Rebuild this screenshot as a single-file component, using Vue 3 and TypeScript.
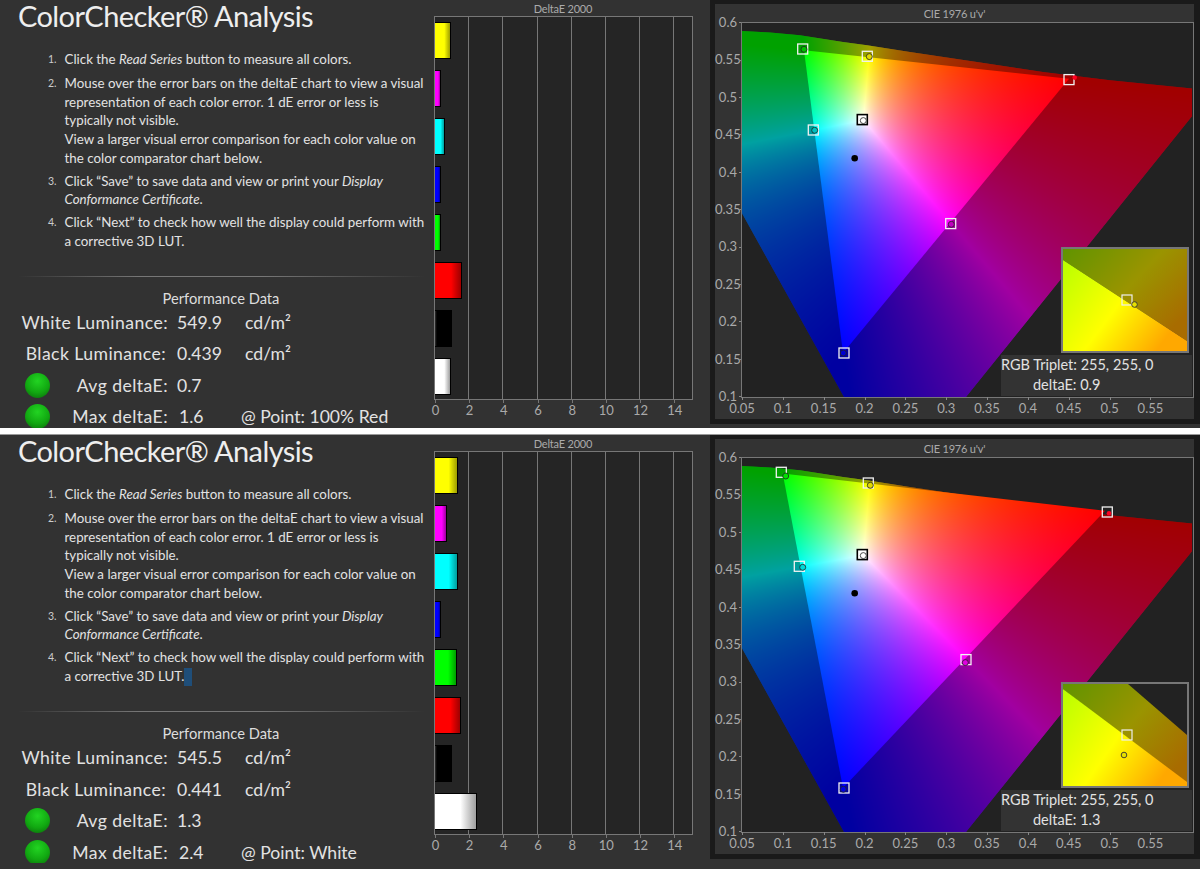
<template>
  <div class="page">
    <section v-for="(panel, i) in panels" :key="i" class="panel" :class="{ first: i === 0 }">
      <div class="info">
        <h1 class="title">ColorChecker® Analysis</h1>
        <ol class="steps">
          <li><span class="num">1.</span><p>Click the <em>Read Series</em> button to measure all colors.</p></li>
          <li>
            <span class="num">2.</span>
            <p>
              Mouse over the error bars on the deltaE chart to view a visual<br />
              representation of each color error. 1 dE error or less is<br />
              typically not visible.<br />
              View a larger visual error comparison for each color value on<br />
              the color comparator chart below.
            </p>
          </li>
          <li>
            <span class="num">3.</span>
            <p>Click “Save” to save data and view or print your <em>Display</em><br /><em>Conformance Certificate</em>.</p>
          </li>
          <li>
            <span class="num">4.</span>
            <p>
              Click “Next” to check how well the display could perform with<br />
              a corrective 3D LUT.<span v-if="panel.selected" class="selection"></span>
            </p>
          </li>
        </ol>
        <div class="rule"></div>
        <h2 class="perf-title">Performance Data</h2>
        <div class="perf">
          <div class="row">
            <span class="label">White Luminance:</span>
            <span class="value">{{ panel.white }}</span>
            <span class="unit">cd/m²</span>
          </div>
          <div class="row">
            <span class="label black">Black Luminance:</span>
            <span class="value">{{ panel.black }}</span>
            <span class="unit">cd/m²</span>
          </div>
          <div class="row">
            <span class="label"><i class="led"></i>Avg deltaE:</span>
            <span class="value">{{ panel.avg }}</span>
          </div>
          <div class="row">
            <span class="label"><i class="led"></i>Max deltaE:</span>
            <span class="value max">{{ panel.max }}</span>
            <span class="point">@ Point: {{ panel.point }}</span>
          </div>
        </div>
      </div>

      <div class="delta">
        <div class="chart-title">DeltaE 2000</div>
        <div class="bars">
          <div
            v-for="bar in panel.bars"
            :key="bar.color"
            class="bar"
            :style="{ width: bar.value * unitWidth + 'px', background: barFill(bar.color) }"
          ></div>
        </div>
        <div class="bar-ticks"></div>
        <div class="bar-labels">
          <span v-for="n in barScale" :key="n">{{ n }}</span>
        </div>
      </div>

      <div class="cie">
        <div class="cie-inner">
          <div class="chart-title cie-title">CIE 1976 u'v'</div>
          <div class="cie-body">
            <div class="y-axis">
              <span v-for="v in yScale" :key="v">{{ v }}</span>
            </div>
            <div class="plot">
              <canvas ref="canvases" :data-panel="i" width="451" height="374"></canvas>
              <svg class="markers" viewBox="742 22.7 451 374" width="451" height="374">
                <circle cx="854.7" cy="158" r="3.3" fill="#000" />
                <g v-for="m in panel.markers" :key="m.color">
                  <rect
                    :x="m.x - 5"
                    :y="m.y - 5"
                    width="10"
                    height="10"
                    :fill="m.color === '#ffffff' ? '#fff' : 'none'"
                    :stroke="m.color === '#ffffff' ? '#000' : '#f2f2f2'"
                    :stroke-width="m.color === '#ffffff' ? 1.6 : 1.3"
                  />
                  <circle :cx="m.cx" :cy="m.cy" :r="m.color === '#ff0020' ? 2.3 : 3" :fill="m.color" :stroke="m.color === '#ff0020' ? 'none' : '#222'" stroke-width="0.8" />
                </g>
              </svg>
              <div class="inset">
                <svg viewBox="0 0 124 102" width="124" height="102">
                  <defs>
                    <linearGradient :id="'hi' + i" x1="0" y1="0" x2="1" y2="0.55">
                      <stop offset="0" stop-color="#b8ff00" />
                      <stop offset="0.55" stop-color="#ffff00" />
                      <stop offset="1" stop-color="#ffa800" />
                    </linearGradient>
                    <linearGradient :id="'lo' + i" x1="0" y1="0" x2="1" y2="0.7">
                      <stop offset="0" stop-color="#609400" />
                      <stop offset="0.55" stop-color="#9a9400" />
                      <stop offset="1" stop-color="#a86c00" />
                    </linearGradient>
                  </defs>
                  <rect width="124" height="102" fill="#222" />
                  <polygon :points="panel.insetBand" :fill="`url(#lo${i})`" />
                  <polygon :points="panel.insetGamut" :fill="`url(#hi${i})`" />
                  <rect x="59" y="46" width="10" height="10" fill="none" stroke="#eee" stroke-width="1.2" />
                  <circle :cx="panel.insetDot[0]" :cy="panel.insetDot[1]" r="2.8" fill="#e6e000" stroke="#333" stroke-width="0.9" />
                </svg>
              </div>
              <div class="readout">
                <div>RGB Triplet: 255, 255, 0</div>
                <div class="readout-delta">deltaE: {{ panel.readout }}</div>
              </div>
            </div>
          </div>
          <div class="x-axis">
            <span v-for="u in xScale" :key="u">{{ u }}</span>
          </div>
        </div>
      </div>
    </section>
  </div>
</template>

<script setup lang="ts">
import { onMounted, ref } from 'vue'

type Pt = [number, number]

interface Marker {
  color: string
  x: number
  y: number
  cx: number
  cy: number
}

interface Bar {
  color: string
  value: number
}

interface Panel {
  selected: boolean
  white: string
  black: string
  avg: string
  max: string
  point: string
  readout: string
  gamut: { r: Pt; g: Pt; b: Pt }
  bars: Bar[]
  markers: Marker[]
  insetBand: string
  insetGamut: string
  insetDot: Pt
}

const unitWidth = 17.1
const barScale = [0, 2, 4, 6, 8, 10, 12, 14]
const yScale = ['0.6', '0.55', '0.5', '0.45', '0.4', '0.35', '0.3', '0.25', '0.2', '0.15', '0.1']
const xScale = ['0.05', '0.1', '0.15', '0.2', '0.25', '0.3', '0.35', '0.4', '0.45', '0.5', '0.55']

const whitePoint: Pt = [863, 119.5]
const locus: Pt[] = [
  [742, 30.7], [770, 32.3], [800, 35], [843, 41.7], [867, 45], [910, 51.7], [977, 61.7],
  [1043, 71.7], [1110, 80], [1192, 88.3], [1192, 116], [966, 396.7], [844, 396.7], [742, 213],
]

const barColors = ['#ffff00', '#ff00ff', '#00ffff', '#0000ff', '#00ff00', '#ff0000', '#000000', '#ffffff']
const makeBars = (values: number[]): Bar[] => values.map((value, i) => ({ color: barColors[i], value }))

const panels: Panel[] = [
  {
    selected: false,
    white: '549.9',
    black: '0.439',
    avg: '0.7',
    max: '1.6',
    point: '100% Red',
    readout: '0.9',
    gamut: { r: [1069, 78.5], g: [804, 50], b: [843, 352.7] },
    bars: makeBars([0.9, 0.3, 0.55, 0.35, 0.3, 1.55, 1.0, 0.93]),
    markers: [
      { color: '#00c000', x: 802.7, y: 48.7, cx: 804, cy: 49 },
      { color: '#e0d800', x: 867.3, y: 56, cx: 869.3, cy: 56.3 },
      { color: '#ff0020', x: 1069, y: 79.3, cx: 1074.7, cy: 77.3 },
      { color: '#ffffff', x: 862.3, y: 119.3, cx: 863.3, cy: 120.3 },
      { color: '#00c0c0', x: 813.3, y: 129.7, cx: 814.7, cy: 130 },
      { color: '#c000c0', x: 950.7, y: 223.3, cx: 951.3, cy: 224 },
      { color: '#0000d0', x: 844, y: 352.7, cx: 843.3, cy: 352.7 },
    ],
    insetBand: '0,0 124,0 124,92 0,11',
    insetGamut: '0,11 124,92 124,102 0,102',
    insetDot: [71.5, 55.5],
  },
  {
    selected: true,
    white: '545.5',
    black: '0.441',
    avg: '1.3',
    max: '2.4',
    point: 'White',
    readout: '1.3',
    gamut: { r: [1105, 75.5], g: [782.7, 38.3], b: [843, 352.7] },
    bars: makeBars([1.35, 0.65, 1.33, 0.35, 1.27, 1.5, 1.0, 2.44]),
    markers: [
      { color: '#00e000', x: 781.3, y: 37, cx: 785.7, cy: 40.7 },
      { color: '#e0d800', x: 868.3, y: 47.7, cx: 870.3, cy: 50 },
      { color: '#ff0020', x: 1107.3, y: 76.7, cx: 1109, cy: 78 },
      { color: '#ffffff', x: 862.3, y: 119.3, cx: 863.3, cy: 120.3 },
      { color: '#00d8d8', x: 799.3, y: 131, cx: 802.7, cy: 132 },
      { color: '#e000e0', x: 966, y: 224.3, cx: 965.3, cy: 227.3 },
      { color: '#0000e0', x: 844, y: 352.7, cx: 843.3, cy: 354 },
    ],
    insetBand: '0,0 65,0 124,51 124,102 0,5',
    insetGamut: '0,5 124,98 124,102 0,102',
    insetDot: [61, 71],
  },
]

const barFill = (color: string): string =>
  color === '#000000'
    ? 'linear-gradient(90deg, #333 0, #000 12%, #000 100%)'
    : `linear-gradient(90deg, ${color} 0, ${color} 62%, color-mix(in srgb, ${color} 62%, #000) 100%)`

const canvases = ref<HTMLCanvasElement[]>([])

const tracePath = (ctx: CanvasRenderingContext2D, pts: Pt[], ox: number, oy: number) => {
  ctx.beginPath()
  pts.forEach(([x, y], i) => (i ? ctx.lineTo(x - ox, y - oy) : ctx.moveTo(x - ox, y - oy)))
  ctx.closePath()
}

// real chromaticity rendering: white-balanced barycentric weights, clamped out of gamut
const drawGamut = (canvas: HTMLCanvasElement, panel: Panel) => {
  const ctx = canvas.getContext('2d')
  if (!ctx) return
  const { width, height } = canvas
  const ox = 742
  const oy = 22.7
  const { r, g, b } = panel.gamut
  const det = (g[1] - b[1]) * (r[0] - b[0]) + (b[0] - g[0]) * (r[1] - b[1])
  const weights = (x: number, y: number): [number, number, number] => {
    const a = ((g[1] - b[1]) * (x - b[0]) + (b[0] - g[0]) * (y - b[1])) / det
    const c = ((b[1] - r[1]) * (x - b[0]) + (r[0] - b[0]) * (y - b[1])) / det
    return [a, c, 1 - a - c]
  }
  const w = weights(whitePoint[0], whitePoint[1])

  const image = ctx.createImageData(width, height)
  for (let py = 0; py < height; py++) {
    for (let px = 0; px < width; px++) {
      const v = weights(px + ox, py + oy)
      const c = v.map((k, n) => Math.max(k / w[n], 0))
      const top = Math.max(c[0], c[1], c[2]) || 1
      const at = (py * width + px) * 4
      for (let n = 0; n < 3; n++) image.data[at + n] = 255 * Math.pow(c[n] / top, 0.95)
      image.data[at + 3] = 255
    }
  }
  const buffer = document.createElement('canvas')
  buffer.width = width
  buffer.height = height
  buffer.getContext('2d')?.putImageData(image, 0, 0)

  ctx.save()
  tracePath(ctx, locus, ox, oy)
  ctx.clip()
  ctx.drawImage(buffer, 0, 0)
  ctx.fillStyle = 'rgba(0, 0, 0, 0.37)'
  ctx.fillRect(0, 0, width, height)
  ctx.restore()

  ctx.save()
  tracePath(ctx, [r, g, b], ox, oy)
  ctx.clip()
  ctx.drawImage(buffer, 0, 0)
  ctx.restore()
}

onMounted(() => {
  canvases.value.forEach((canvas) => drawGamut(canvas, panels[Number(canvas.dataset.panel)]))
})
</script>

<style>
html,
body {
  margin: 0;
  background: #333;
}
</style>

<style scoped>
.page {
  width: 1200px;
  height: 869px;
  overflow: hidden;
  font-family: Lato, "Open Sans", sans-serif;
  background: #333;
}

.panel {
  display: flex;
  height: 434px;
  overflow: hidden;
  background: #323232;
}

.panel.first {
  height: 428px;
  margin-bottom: 7px;
  overflow: visible;
  box-shadow: 0 6px 0 #fff, 0 7px 0 #999;
}

.info {
  width: 430px;
  height: 428px;
  overflow: hidden;
  flex: none;
  color: #e2e2e2;
}

.title {
  margin: 0;
  padding: 0 0 0 18px;
  font-size: 29px;
  line-height: 31px;
  font-weight: 400;
  color: #eee;
  white-space: nowrap;
  letter-spacing: -0.6px;
}

.steps {
  margin: 19px 0 0;
  padding: 0 0 0 48px;
  list-style: none;
}

.steps li {
  display: flex;
  margin-bottom: 4.3px;
}

.steps p {
  margin: 0;
  font-size: 13.35px;
  line-height: 18.7px;
  white-space: nowrap;
}

.num {
  width: 16.5px;
  flex: none;
  font-size: 10.5px;
  line-height: 19.5px;
  color: #ccc;
}

.selection {
  display: inline-block;
  width: 8px;
  height: 18px;
  vertical-align: -5px;
  background: #1f4e79;
}

.rule {
  height: 1px;
  margin: 25px 5px 0 18px;
  background: linear-gradient(90deg, transparent, #777 30%, #777 60%, transparent);
}

.perf-title {
  margin: 12px 0 0;
  padding-left: 12px;
  font-size: 14.7px;
  line-height: 18px;
  font-weight: 400;
  text-align: center;
  color: #ddd;
}

.row {
  display: flex;
  align-items: center;
  height: 31.5px;
  font-size: 17.6px;
  white-space: nowrap;
}

.label {
  display: flex;
  justify-content: flex-end;
  width: 168px;
  flex: none;
  box-sizing: border-box;
  position: relative;
  letter-spacing: 0.44px;
}

.label.black {
  padding-right: 2px;
}

.led {
  position: absolute;
  left: 25px;
  top: -2px;
  width: 25px;
  height: 25px;
  border-radius: 50%;
  background: radial-gradient(circle at 50% 32%, #22d422 0, #11a811 55%, #0a640a 100%);
}

.value {
  width: 69px;
  margin-left: 9px;
  flex: none;
}

.value.max {
  width: 62px;
  margin-left: 11px;
}

.unit {
  margin-left: -1px;
}

.delta {
  width: 280px;
  flex: none;
  color: #aaa;
}

.chart-title {
  font-size: 11px;
  letter-spacing: -0.2px;
  line-height: 17px;
  text-align: center;
  color: #aaa;
  padding-right: 14px;
}

.bars {
  display: flex;
  flex-direction: column;
  gap: 11px;
  box-sizing: border-box;
  width: 256.5px;
  height: 382px;
  margin-left: 5.4px;
  padding-top: 5.4px;
  background-color: #252525;
  background-image: repeating-linear-gradient(90deg, transparent 0, transparent 33.2px, #777 33.2px, #777 34.2px);
  outline: 1px solid #777;
}

.bar {
  height: 37px;
  flex: none;
  box-sizing: border-box;
  border: 1px solid #000;
  border-left: none;
}

.bar-ticks {
  width: 256.5px;
  height: 4px;
  margin-left: 5.4px;
  background: repeating-linear-gradient(90deg, #777 0, #777 1px, transparent 1px, transparent 34.2px);
  background-size: 240px 100%;
  background-repeat: no-repeat;
}

.bar-labels {
  display: flex;
  margin-left: -11.7px;
  font-size: 13px;
  line-height: 15px;
}

.bar-labels span {
  width: 34.2px;
  flex: none;
  text-align: center;
}

.cie {
  flex: 1;
  height: 424px;
  box-sizing: border-box;
  padding: 3.5px 6px 5px 5px;
  background: #1a1a1a;
}

.cie-inner {
  height: 100%;
  background: #333;
}

.cie-title {
  line-height: 19.2px;
  height: 19.2px;
  padding: 0;
}

.cie-body {
  display: flex;
  height: 374px;
}

.y-axis {
  width: 27px;
  flex: none;
  margin-top: -18.7px;
  font-size: 13px;
  color: #aaa;
}

.y-axis span {
  position: relative;
  display: block;
  height: 37.4px;
  line-height: 37.4px;
  padding-right: 5px;
  text-align: right;
}

.y-axis span::after {
  content: '';
  position: absolute;
  right: 0;
  top: 18.2px;
  width: 3px;
  height: 1px;
  background: #888;
}

.plot {
  position: relative;
  width: 451px;
  height: 374px;
  flex: none;
  background: #222;
  outline: 1px solid #777;
}

.plot canvas,
.markers {
  position: absolute;
  left: 0;
  top: 0;
  display: block;
}

.inset {
  position: absolute;
  left: 319.3px;
  top: 224.6px;
  border: 2px solid #777;
  line-height: 0;
}

.readout {
  position: absolute;
  left: 259px;
  top: 332.3px;
  width: 191px;
  height: 41px;
  background: #333;
  color: #e2e2e2;
  font-size: 14.5px;
  line-height: 20.5px;
  white-space: nowrap;
}

.readout-delta {
  padding-left: 32px;
}

.x-axis {
  display: flex;
  margin-left: 6.6px;
  font-size: 13px;
  line-height: 17px;
  padding-top: 3.5px;
  color: #aaa;
}

.x-axis span {
  position: relative;
  width: 40.85px;
  flex: none;
  text-align: center;
}

.x-axis span::before {
  content: '';
  position: absolute;
  left: 50%;
  top: -3.5px;
  width: 1px;
  height: 3px;
  background: #888;
}
</style>
